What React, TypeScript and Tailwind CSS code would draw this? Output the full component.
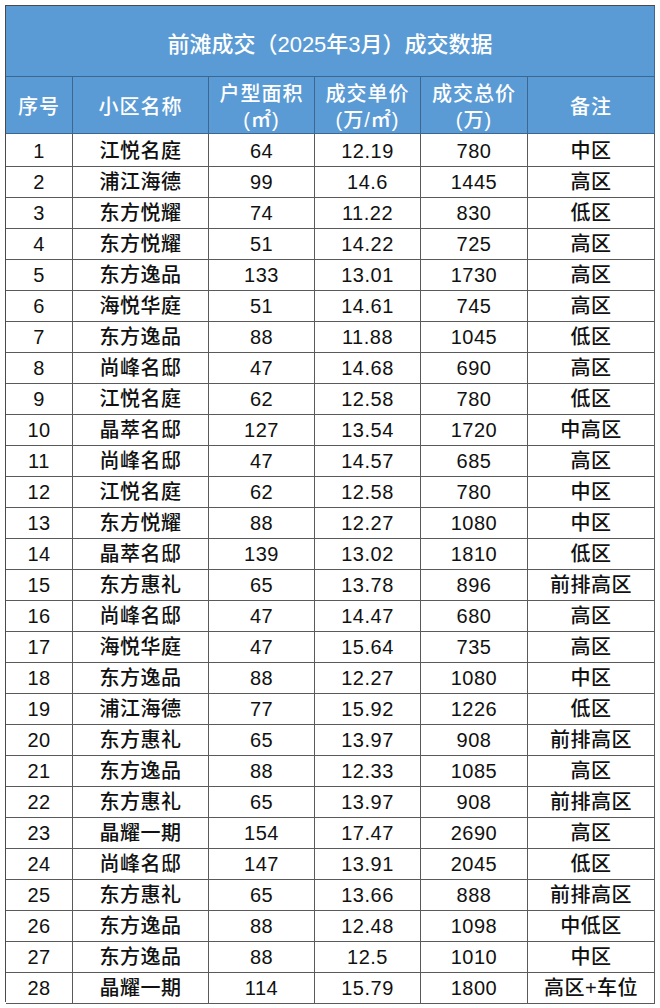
const rows: [string, string, string, string, string, string][] = [
  ["1", "江悦名庭", "64", "12.19", "780", "中区"],
  ["2", "浦江海德", "99", "14.6", "1445", "高区"],
  ["3", "东方悦耀", "74", "11.22", "830", "低区"],
  ["4", "东方悦耀", "51", "14.22", "725", "高区"],
  ["5", "东方逸品", "133", "13.01", "1730", "高区"],
  ["6", "海悦华庭", "51", "14.61", "745", "高区"],
  ["7", "东方逸品", "88", "11.88", "1045", "低区"],
  ["8", "尚峰名邸", "47", "14.68", "690", "高区"],
  ["9", "江悦名庭", "62", "12.58", "780", "低区"],
  ["10", "晶萃名邸", "127", "13.54", "1720", "中高区"],
  ["11", "尚峰名邸", "47", "14.57", "685", "高区"],
  ["12", "江悦名庭", "62", "12.58", "780", "中区"],
  ["13", "东方悦耀", "88", "12.27", "1080", "中区"],
  ["14", "晶萃名邸", "139", "13.02", "1810", "低区"],
  ["15", "东方惠礼", "65", "13.78", "896", "前排高区"],
  ["16", "尚峰名邸", "47", "14.47", "680", "高区"],
  ["17", "海悦华庭", "47", "15.64", "735", "高区"],
  ["18", "东方逸品", "88", "12.27", "1080", "中区"],
  ["19", "浦江海德", "77", "15.92", "1226", "低区"],
  ["20", "东方惠礼", "65", "13.97", "908", "前排高区"],
  ["21", "东方逸品", "88", "12.33", "1085", "高区"],
  ["22", "东方惠礼", "65", "13.97", "908", "前排高区"],
  ["23", "晶耀一期", "154", "17.47", "2690", "高区"],
  ["24", "尚峰名邸", "147", "13.91", "2045", "低区"],
  ["25", "东方惠礼", "65", "13.66", "888", "前排高区"],
  ["26", "东方逸品", "88", "12.48", "1098", "中低区"],
  ["27", "东方逸品", "88", "12.5", "1010", "中区"],
  ["28", "晶耀一期", "114", "15.79", "1800", "高区+车位"],
]

const cols = "grid grid-cols-[67px_136px_106px_106px_107px_127px]"
const font = { fontFamily: '"Liberation Sans", "Noto Sans CJK SC", sans-serif' }

export default function App() {
  return (
    <div className="min-h-screen bg-white pl-[5px] pt-[5px]" style={font}>
      <div className="w-[650px] border-l border-t border-[#4a4a4a]">
        <div className="flex h-[71px] items-center justify-center border-b border-r border-[#3b6790] bg-[#5b9bd5] pt-[6px] text-[22px] font-medium text-white">
          前滩成交（2025年3月）成交数据
        </div>
        <div className={`${cols} h-[57px] bg-[#5b9bd5] text-[20px] font-medium leading-[26px] text-white`}>
          {[
            ["序号"],
            ["小区名称"],
            ["户型面积", "(㎡)"],
            ["成交单价", "(万/㎡)"],
            ["成交总价", "(万)"],
            ["备注"],
          ].map((lines, i) => (
            <div
              key={i}
              className="flex flex-col items-center justify-center border-b border-r border-[#3b6790] pt-[3px] tracking-[1px]"
            >
              {lines.map((l) => (
                <span key={l}>{l}</span>
              ))}
            </div>
          ))}
        </div>
        {rows.map((r) => (
          <div key={r[0]} className={`${cols} h-[31px] text-[20px] font-medium text-[#111]`}>
            {r.map((c, i) => (
              <div
                key={i}
                className="flex items-center justify-center border-b border-r border-[#5a5a5a] pt-[2px] tracking-[0.5px]"
              >
                {c}
              </div>
            ))}
          </div>
        ))}
      </div>
    </div>
  )
}
